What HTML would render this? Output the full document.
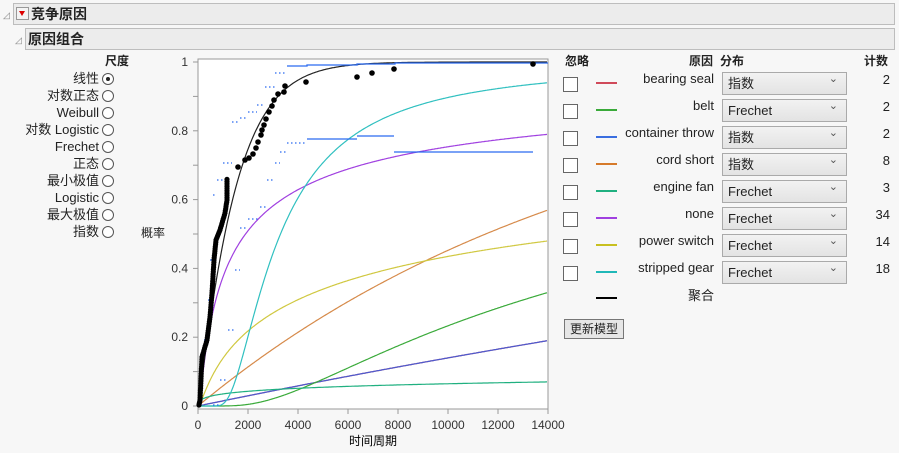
<!DOCTYPE html>
<html><head><meta charset="utf-8"><style>
body{margin:0;width:899px;height:453px;background:#f7f7f7;font-family:"Liberation Sans","Noto Sans CJK SC",sans-serif;font-size:12px;color:#222;position:relative;overflow:hidden}
.a{position:absolute;white-space:nowrap;line-height:15px}
.bar{position:absolute;background:#ececec;border:1px solid #bdbdbd;font-weight:bold;font-size:14px;line-height:20px;padding-left:2px}
.rad{position:absolute;width:10px;height:10px;border:1px solid #555;border-radius:50%;background:#fff}
.lbl{position:absolute;right:800px;text-align:right;font-size:13px;line-height:15px;white-space:nowrap}
.cb{position:absolute;left:563px;width:13px;height:13px;border:1px solid #666;background:#fff}
.ln{position:absolute;left:596px;width:21px;height:2px}
.cz{position:absolute;right:185px;text-align:right;white-space:nowrap;font-size:13px;line-height:15px}
.sel{position:absolute;left:722px;border:1px solid #aaa;background:linear-gradient(#f2f2f2,#e3e3e3);font-size:13px;line-height:21px;padding-left:5px;box-sizing:border-box;width:125px;height:23px}
.sel:after{content:"⌄";position:absolute;right:8px;top:-4px;font-size:11px;color:#555}
.cnt{position:absolute;right:9px;text-align:right;font-size:13px;line-height:15px}
</style></head><body>
<div class="a" style="left:3px;top:8px;font-size:9px;color:#888">◿</div>
<div class="bar" style="left:13px;top:3px;width:878px;height:20px"><span style="display:inline-block;width:11px;height:11px;border:1px solid #999;background:#f4f4f4;vertical-align:-1px;position:relative;margin-right:2px"><span style="position:absolute;left:2px;top:3px;border-left:3.5px solid transparent;border-right:3.5px solid transparent;border-top:5px solid #d00"></span></span>竞争原因</div>
<div class="a" style="left:15px;top:33px;font-size:9px;color:#888">◿</div>
<div class="bar" style="left:25px;top:28px;width:866px;height:20px">原因组合</div>

<div class="a" style="left:105px;top:54px;font-weight:bold">尺度</div>
<div class="lbl" style="top:71px">线性</div><div class="rad" style="left:102px;top:73px"><div style="position:absolute;left:3px;top:3px;width:4px;height:4px;border-radius:50%;background:#222"></div></div>
<div class="lbl" style="top:88px">对数正态</div><div class="rad" style="left:102px;top:90px"></div>
<div class="lbl" style="top:105px">Weibull</div><div class="rad" style="left:102px;top:107px"></div>
<div class="lbl" style="top:122px">对数 Logistic</div><div class="rad" style="left:102px;top:124px"></div>
<div class="lbl" style="top:139px">Frechet</div><div class="rad" style="left:102px;top:141px"></div>
<div class="lbl" style="top:156px">正态</div><div class="rad" style="left:102px;top:158px"></div>
<div class="lbl" style="top:173px">最小极值</div><div class="rad" style="left:102px;top:175px"></div>
<div class="lbl" style="top:190px">Logistic</div><div class="rad" style="left:102px;top:192px"></div>
<div class="lbl" style="top:207px">最大极值</div><div class="rad" style="left:102px;top:209px"></div>
<div class="lbl" style="top:224px">指数</div><div class="rad" style="left:102px;top:226px"></div>
<div class="a" style="left:141px;top:226px">概率</div>

<svg id="plot" class="a" style="left:0;top:0" width="600" height="453" font-family="Liberation Sans" font-size="12"></svg>

<div class="a" style="left:565px;top:54px;font-weight:bold">忽略</div>
<div class="a" style="left:689px;top:54px;font-weight:bold">原因</div>
<div class="a" style="left:720px;top:54px;font-weight:bold">分布</div>
<div class="a" style="left:864px;top:54px;font-weight:bold">计数</div>
<div id="rows"></div>
<div class="ln" style="top:297px;background:#000"></div>
<div class="cz" style="top:288px">聚合</div>
<div class="a" style="left:564px;top:319px;width:58px;height:18px;border:1px solid #777;background:#e6e6e6;text-align:center;line-height:18px">更新模型</div>
<script>
var rows=[["bearing seal","#d04a5a","指数",2],["belt","#3aaa3a","Frechet",2],["container throw","#3a6ee0","指数",2],["cord short","#d67a2a","指数",8],["engine fan","#20b080","Frechet",3],["none","#a040e0","Frechet",34],["power switch","#c8c020","Frechet",14],["stripped gear","#20b8b8","Frechet",18]];
var h="";rows.forEach(function(r,i){var y=72+27*i;
h+='<div class="cb" style="top:'+(y+5)+'px"></div><div class="ln" style="top:'+(y+10)+'px;background:'+r[1]+'"></div><div class="cz" style="top:'+(y-1)+'px">'+r[0]+'</div><div class="sel" style="top:'+y+'px">'+r[2]+'</div><div class="cnt" style="top:'+(y)+'px">'+r[3]+'</div>';});
document.getElementById("rows").innerHTML=h;
var X=function(t){return 198+t*0.025},Y=function(p){return 406-344*p};
var s='<rect x="198" y="59" width="350" height="350" fill="#fff" stroke="#999"/>';
for(var k=0;k<=7;k++){var x=X(k*2000);s+='<line x1="'+x+'" y1="409" x2="'+x+'" y2="414" stroke="#999"/><text x="'+x+'" y="429" text-anchor="middle" fill="#333">'+(k*2000)+'</text>';}
for(k=0;k<=10;k++){var y=Y(k/10);s+='<line x1="193" y1="'+y+'" x2="198" y2="'+y+'" stroke="#999"/>';if(k%2==0)s+='<text x="188" y="'+(y+4)+'" text-anchor="end" fill="#333">'+(k==0?'0':k==10?'1':(k/10).toFixed(1))+'</text>';}
s+='<text x="373" y="445" text-anchor="middle">时间周期</text>';
function curve(f,c){var d="";for(var t=1;t<=14000;t+=40){d+=(d?"L":"M")+X(t).toFixed(1)+","+Y(f(t)).toFixed(1);}s+='<path d="'+d+'" fill="none" stroke="'+c+'" stroke-width="1.2"/>';}
function fr(sc,a){return function(t){return Math.exp(-Math.pow(t/sc,-a))}}
function ex(sc){return function(t){return 1-Math.exp(-t/sc)}}
curve(ex(66400),"#d04a5a");curve(ex(66400),"#4a5ad0");
curve(fr(15900,0.81),"#3aaa3a");curve(ex(16600),"#d68a4a");
curve(fr(6140,0.375),"#d0c840");curve(fr(965,0.54),"#a040e0");
curve(fr(1e9,0.0875),"#20b080");curve(fr(2650,1.67),"#30c0c0");
curve(function(t){return 1-Math.exp(-Math.pow(t/1500,1.1))},"#222");
function step(pts){var d="";for(var i=0;i<pts.length-1;i++){var x0=pts[i][0],x1=pts[i+1][0],y=pts[i][1];d+="M"+x0+","+y+"H"+x1;}s+='<path d="'+d+'" fill="none" stroke="#2a6af0" stroke-width="1.3" stroke-dasharray="1.5 2.5"/>';}
step([[200,390],[204,340],[208,300],[210,260],[213,195],[217,180],[223,163],[232,122],[240,118],[248,112],[257,105],[265,87],[275,73],[287,67]]);
step([[213,405],[220,380],[228,330],[235,270],[240,228],[248,219],[260,207],[267,180],[275,163],[280,152],[287,143],[307,139]]);
s+='<path d="M287,66H307V65H357V64H395V63H548" stroke="#2a6af0" stroke-width="1.3" fill="none"/>';
s+='<path d="M307,139H357M357,136H394M394,152H533" stroke="#2a6af0" stroke-width="1.3" fill="none"/>';
var emp=[[199,405],[200,400],[202,357],[207,340],[210,317],[212,293],[214,260],[216,240],[220,230],[225,213],[227,200],[227,177]];
var dots="";for(var i=0;i<emp.length-1;i++){var a=emp[i],b=emp[i+1],n=Math.ceil(Math.hypot(b[0]-a[0],b[1]-a[1])/2.5);for(var j=0;j<n;j++){var q=j/n;dots+='<circle cx="'+(a[0]+(b[0]-a[0])*q).toFixed(1)+'" cy="'+(a[1]+(b[1]-a[1])*q).toFixed(1)+'" r="2.6"/>';}}
[[238,167],[245,160],[249,158],[253,154],[256,148],[258,142],[261,135],[262,130],[264,125],[266,119],[269,112],[272,106],[274,100],[278,94],[284,92],[285,86],[306,82],[357,77],[372,73],[394,69],[533,64]].forEach(function(p){dots+='<circle cx="'+p[0]+'" cy="'+p[1]+'" r="2.8"/>';});
s+='<g fill="#000">'+dots+'</g>';
document.getElementById("plot").innerHTML=s;
</script>
</body></html>
